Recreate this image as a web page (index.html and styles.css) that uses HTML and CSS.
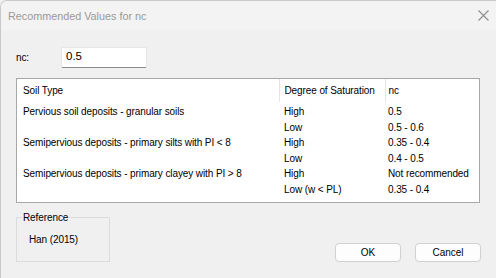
FILE: index.html
```html
<!DOCTYPE html>
<html lang="en">
<head>
    <meta charset="UTF-8">
    <title>Recommended Values for nc</title>
    <link rel="stylesheet" href="styles.css">
</head>
<body>
    <div class="window">
        <div class="titlebar">
            <span class="title">Recommended Values for nc</span>
            <svg class="close" width="11" height="11" viewBox="0 0 11 11">
                <path d="M0.5 0.5 L10.5 10.5 M10.5 0.5 L0.5 10.5" stroke="#8c8c8c" stroke-width="1.1" fill="none"/>
            </svg>
        </div>
        <div class="content">
            <div class="field">
                <label class="field-label">nc:</label>
                <div class="input">0.5</div>
            </div>

            <div class="list">
                <table>
                    <thead>
                        <tr>
                            <th class="col-soil">Soil Type</th>
                            <th class="col-sat">Degree of Saturation</th>
                            <th class="col-nc">nc</th>
                        </tr>
                    </thead>
                    <tbody>
                        <tr><td>Pervious soil deposits - granular soils</td><td>High</td><td>0.5</td></tr>
                        <tr><td></td><td>Low</td><td>0.5 - 0.6</td></tr>
                        <tr><td>Semipervious deposits - primary silts with PI &lt; 8</td><td>High</td><td>0.35 - 0.4</td></tr>
                        <tr><td></td><td>Low</td><td>0.4 - 0.5</td></tr>
                        <tr><td>Semipervious deposits - primary clayey with PI &gt; 8</td><td>High</td><td>Not recommended</td></tr>
                        <tr><td></td><td>Low (w &lt; PL)</td><td>0.35 - 0.4</td></tr>
                    </tbody>
                </table>
            </div>

            <div class="bottom">
                <fieldset class="group">
                    <legend>Reference</legend>
                    <div class="group-text">Han (2015)</div>
                </fieldset>
                <div class="buttons">
                    <button class="btn">OK</button>
                    <button class="btn">Cancel</button>
                </div>
            </div>
        </div>
    </div>
</body>
</html>
```

FILE: styles.css
```css
body {
    margin: 0;
    padding: 0;
    background-color: #f0f0f0;
    font-family: 'Liberation Sans', Arial, sans-serif;
    font-size: 10px;
    letter-spacing: -0.1px;
    color: #000;
}

.window {
    width: 496px;
    height: 278px;
    box-sizing: border-box;
    border-top: 1px solid #c8c8c8;
    border-left: 1px solid #c8c8c8;
    border-top-left-radius: 7px;
    background-color: #f0f0f0;
    overflow: hidden;
}

.titlebar {
    height: 29px;
    display: flex;
    align-items: center;
    justify-content: space-between;
    padding: 0 7px 0 7px;
    background-color: #f3f3f3;
}

.title {
    font-size: 10.8px;
    letter-spacing: 0;
    color: #999;
}

.close {
    margin-top: -1px;
}

.content {
    padding: 0 15px;
}

.field {
    display: flex;
    align-items: center;
    margin-top: 17px;
    height: 20px;
}

.field-label {
    width: 45px;
}

.input {
    width: 80px;
    height: 19px;
    line-height: 17px;
    padding-left: 4px;
    background-color: #fff;
    border: 1px solid #e6e6e6;
    border-bottom: 1px solid #8a8a8a;
    border-radius: 2px;
    font-size: 11.5px;
    letter-spacing: 0;
}

.list {
    margin-top: 11px;
    width: 464px;
    height: 125px;
    box-sizing: border-box;
    border: 1px solid #a8a8a8;
    background-color: #fff;
}

table {
    width: 100%;
    border-collapse: collapse;
    table-layout: fixed;
}

th, td {
    box-sizing: border-box;
    text-align: left;
    font-weight: normal;
    padding: 0;
    white-space: nowrap;
}

th {
    height: 23px;
    line-height: 23px;
}

td {
    height: 15.5px;
    line-height: 15.5px;
}

tbody tr:first-child td {
    padding-top: 2px;
}

.col-soil {
    width: 262px;
}

.col-sat {
    width: 106px;
}

th.col-sat, th.col-nc {
    border-left: 1px solid #e5e5e5;
}

th:first-child, td:first-child {
    padding-left: 6px;
}

th:nth-child(2), td:nth-child(2) {
    padding-left: 5px;
}

th:nth-child(3), td:nth-child(3) {
    padding-left: 3px;
}

.bottom {
    display: flex;
    justify-content: space-between;
    align-items: flex-end;
}

.group {
    margin: 9px 0 0 0;
    width: 94px;
    height: 50px;
    box-sizing: border-box;
    border: 1px solid #dcdcdc;
    padding: 0 0 0 12px;
}

.group legend {
    padding: 0 1px;
    margin-left: -7px;
}

.group-text {
    margin-top: 11px;
}

.buttons {
    display: flex;
    gap: 14px;
    margin-bottom: 0;
}

.btn {
    width: 66px;
    height: 19px;
    background-color: #fdfdfd;
    border: 1px solid #d0d0d0;
    border-radius: 4px;
    font-family: 'Liberation Sans', Arial, sans-serif;
    font-size: 10px;
    color: #000;
    padding: 0;
}
```
